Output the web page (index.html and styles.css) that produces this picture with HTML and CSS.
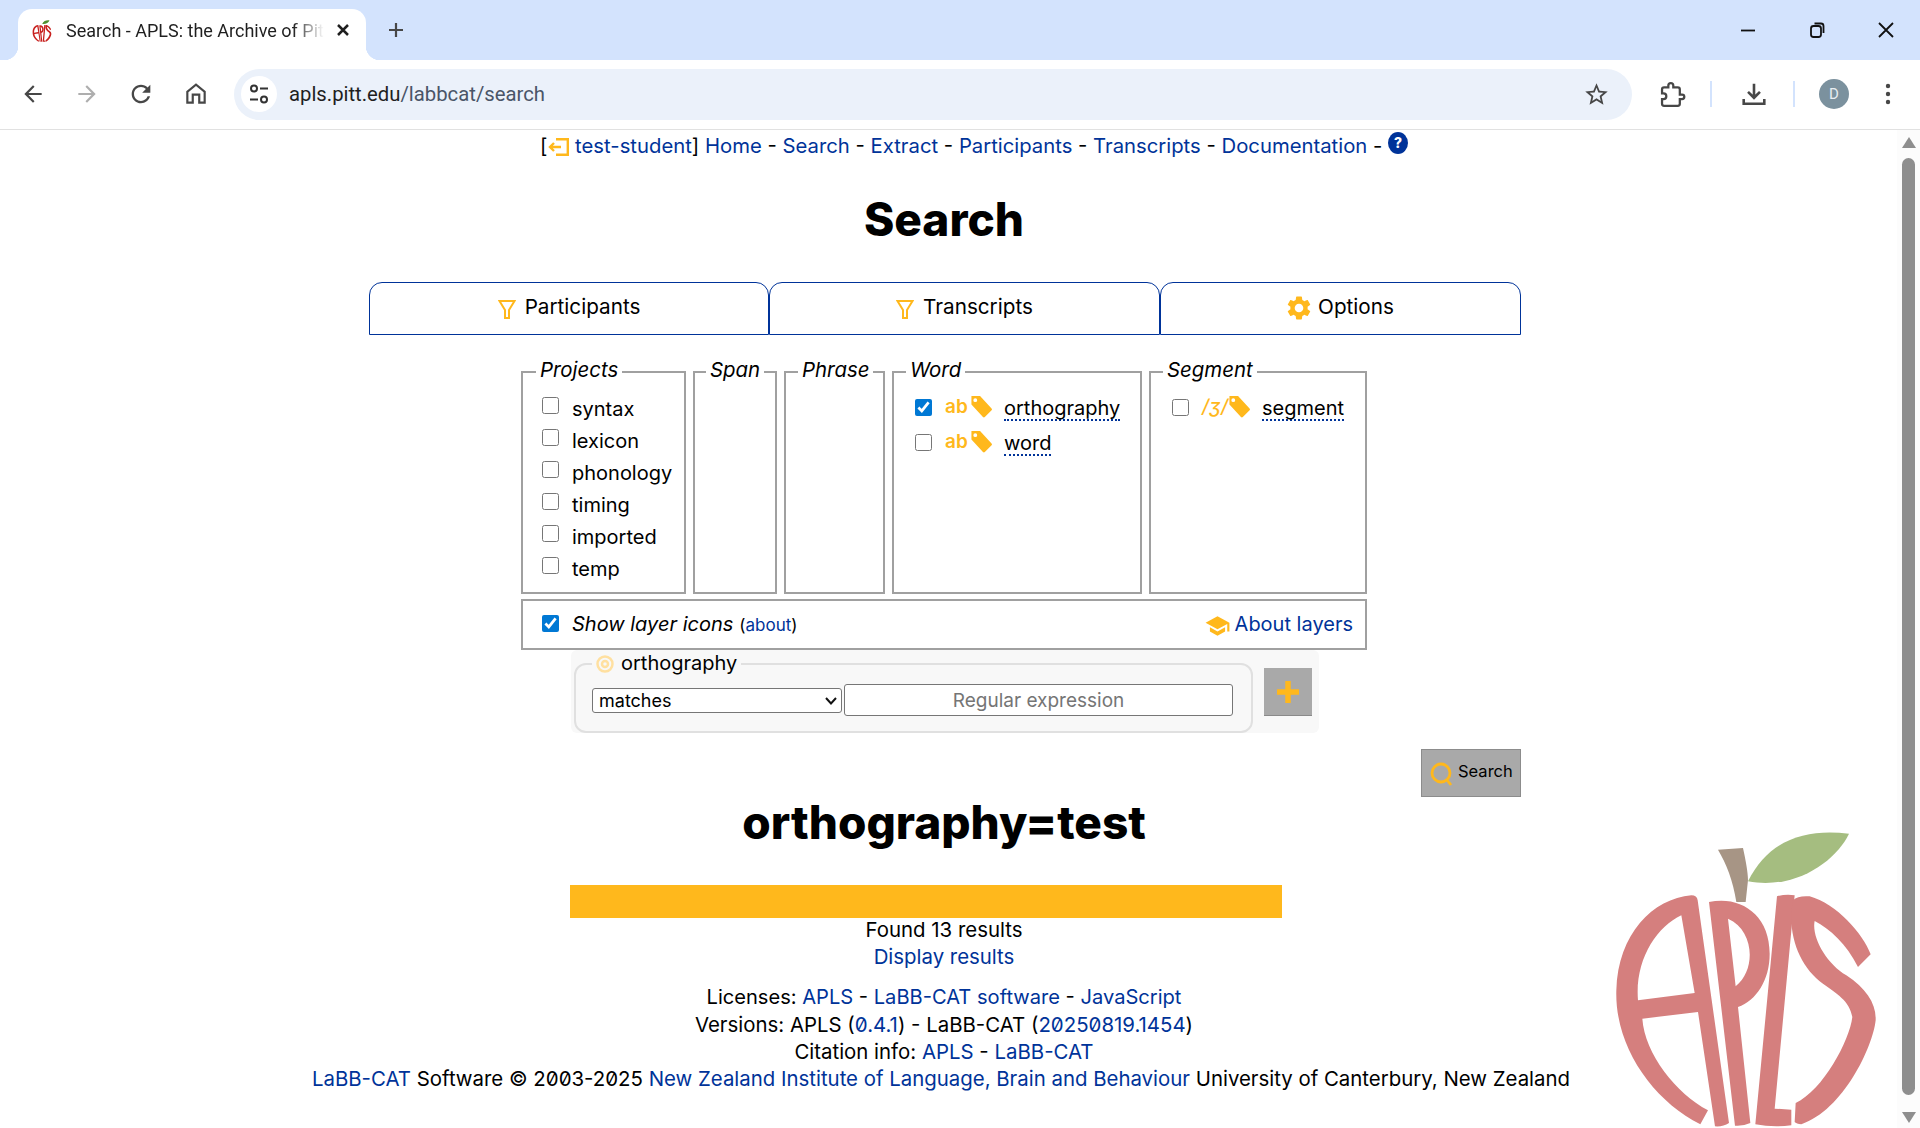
FILE: index.html
```html
<!DOCTYPE html>
<html lang="en">
<head>
<meta charset="utf-8">
<title>Search - APLS: the Archive of Pitt Language Samples</title>
<link rel="stylesheet" href="styles.css">
</head>
<body>
<svg class="defs" width="0" height="0" aria-hidden="true">
  <defs>
    <symbol id="apple-letters" viewBox="100 80 800 904">
      <path fill-rule="evenodd" d="M335 285 Q352 285 354 300 L448 968 Q430 980 406 978 L355 635 L188 655 C195 760 290 880 385 930 L362 972 C220 900 105 740 110 570 C115 400 220 295 335 285 Z M305 345 C230 380 165 480 175 600 L345 578 Z"/>
      <path fill-rule="evenodd" d="M388 305 C480 285 570 340 570 460 C570 540 530 600 475 620 L512 968 Q490 978 466 976 Z M445 355 L468 558 C530 510 525 390 445 355 Z"/>
      <path d="M592 288 Q620 280 645 285 L585 925 L635 928 L635 975 Q580 982 527 972 Z"/>
      <path d="M640 300 Q655 285 690 288 C770 310 850 400 873 462 L835 500 C800 430 750 385 705 362 C695 410 740 490 800 525 C860 565 890 610 888 660 C880 740 790 930 665 972 Q650 970 645 965 L648 908 C730 870 810 720 818 650 C810 600 770 580 730 550 C660 500 620 400 640 300 Z"/>
    </symbol>
    <symbol id="tag" viewBox="0 0 23 24">
      <path fill-rule="evenodd" d="M1 1 H10 L22 14 Q23 15 22 16 L15 23 Q14 24 13 23 L1 10 Z M5 3.4 A2 2 0 1 0 5 7.4 A2 2 0 1 0 5 3.4 Z"/>
    </symbol>
    <symbol id="funnel" viewBox="0 0 18 19">
      <path d="M1.5 1 H16.5 L11 10 V18 H7 V10 Z" fill="none" stroke="currentColor" stroke-width="2"/>
    </symbol>
  </defs>
</svg>

<div class="app">
  <header class="tabstrip">
    <div class="tab">
      <svg class="favicon" width="22" height="24" viewBox="100 0 800 984">
        <path class="fav-leaf" d="M505 243 C570 110 690 85 808 100 C770 180 650 270 505 243 Z"/>
        <g class="fav-red"><use href="#apple-letters" x="100" y="80" width="800" height="904"/></g>
      </svg>
      <span class="tab-title">Search - APLS: the Archive of Pit</span>
      <svg class="tab-close" width="14" height="14" viewBox="0 0 14 14"><path d="M2 2 L12 12 M12 2 L2 12"/></svg>
    </div>
    <svg class="new-tab" width="18" height="18" viewBox="0 0 18 18"><path d="M9 2 V16 M2 9 H16"/></svg>
    <div class="window-buttons">
      <svg width="18" height="18" viewBox="0 0 18 18"><path d="M2 9.5 H16"/></svg>
      <svg width="18" height="18" viewBox="0 0 18 18"><rect x="3" y="5" width="10" height="11" rx="2.5"/><path d="M6.5 2.5 H13 Q15.5 2.5 15.5 5 V12"/></svg>
      <svg width="18" height="18" viewBox="0 0 18 18"><path d="M2 2 L16 16 M16 2 L2 16"/></svg>
    </div>
  </header>

  <div class="toolbar">
    <div class="nav-buttons">
      <svg class="ticon" width="26" height="26" viewBox="0 0 24 24"><path d="M20 11H7.83l5.59-5.59L12 4l-8 8 8 8 1.41-1.41L7.83 13H20v-2z"/></svg>
      <svg class="ticon dim" width="26" height="26" viewBox="0 0 24 24"><path d="M4 11h12.17l-5.59-5.59L12 4l8 8-8 8-1.41-1.41L16.17 13H4v-2z"/></svg>
      <svg class="ticon" width="28" height="28" viewBox="0 0 24 24"><path d="M17.65 6.35C16.2 4.9 14.21 4 12 4c-4.42 0-7.99 3.58-7.99 8s3.57 8 7.99 8c3.73 0 6.84-2.55 7.73-6h-2.08c-.82 2.33-3.04 4-5.65 4-3.31 0-6-2.69-6-6s2.69-6 6-6c1.66 0 3.14.69 4.22 1.78L13 11h7V4l-2.35 2.35z"/></svg>
      <svg class="ticon" width="26" height="28" viewBox="0 0 24 24"><path fill-rule="evenodd" d="M12 2 L21 9.5 V21 H14 V13.5 H10 V21 H3 V9.5 Z M12 4.6 L5 10.4 V19 H8 V11.5 H16 V19 H19 V10.4 Z"/></svg>
    </div>
    <div class="address">
      <span class="site-info">
        <svg width="22" height="22" viewBox="0 0 22 22"><circle cx="6" cy="5.5" r="3"/><path d="M12 5.5 H20 M2 16.5 H10"/><circle cx="16" cy="16.5" r="3"/></svg>
      </span>
      <span class="url">apls.pitt.edu<span class="url-path">/labbcat/search</span></span>
      <svg class="ticon star" width="27" height="27" viewBox="0 0 24 24"><path d="M22 9.24l-7.19-.62L12 2 9.19 8.63 2 9.24l5.46 4.73L5.82 21 12 17.27 18.18 21l-1.63-7.03L22 9.24zM12 15.4l-3.76 2.27 1-4.28-3.32-2.88 4.38-.38L12 6.1l1.71 4.04 4.38.38-3.32 2.88 1 4.28L12 15.4z"/></svg>
    </div>
    <div class="toolbar-right">
      <svg class="ext" width="27" height="27" viewBox="0 0 24 24"><path d="M20.5 12H18.5V7.5c0-1-.8-1.8-1.8-1.8h-4V4a2.2 2.2 0 0 0-4.4 0v1.700H4.500c-1 0-1.800.8-1.800 1.800V11h1.300a2.500 2.500 0 0 1 0 5H2.700v4.200c0 1 .8 1.800 1.800 1.800h12.200c1 0 1.800-.8 1.800-1.800V16h2a2 2 0 0 0 0-4z"/></svg>
      <span class="tsep"></span>
      <svg class="dl" width="26" height="26" viewBox="0 0 24 24"><path d="M12 2.500 V15 M6.500 10 L12 15.500 L17.500 10 M2.500 16.500 V21 H21.500 V16.500"/></svg>
      <span class="tsep"></span>
      <span class="avatar">D</span>
      <svg class="ticon dots" width="6" height="24" viewBox="0 0 6 24"><circle cx="3" cy="4" r="2.200"/><circle cx="3" cy="12" r="2.200"/><circle cx="3" cy="20" r="2.200"/></svg>
    </div>
  </div>

  <div class="viewport">
    <main class="page">
      <nav class="topnav">[<svg class="login" width="21" height="18" viewBox="0 0 21 18"><path d="M8 1.200 H19.800 V16.800 H8 M13 9 H2 M6 5 L2 9 L6 13"/></svg> <a href="#">test-student</a>] <a href="#">Home</a> - <a href="#">Search</a> - <a href="#">Extract</a> - <a href="#">Participants</a> - <a href="#">Transcripts</a> - <a href="#">Documentation</a> - <a href="#" class="help">?</a></nav>

      <h1 class="title">Search</h1>

      <div class="form">
        <div class="tabs">
          <button class="seg seg-a" type="button"><svg class="ficon" width="18" height="19"><use href="#funnel"/></svg>Participants</button>
          <button class="seg seg-b" type="button"><svg class="ficon" width="18" height="19"><use href="#funnel"/></svg>Transcripts</button>
          <button class="seg seg-c" type="button"><svg class="gear" width="24" height="24" viewBox="2 2 20 20"><path d="M19.140 12.940c.04-.3.06-.61.06-.94 0-.32-.02-.64-.07-.94l2.030-1.580c.18-.14.23-.41.12-.61l-1.920-3.320c-.12-.22-.37-.29-.59-.22l-2.390.96c-.5-.38-1.030-.7-1.620-.94l-.36-2.540c-.04-.24-.24-.41-.48-.41h-3.840c-.24 0-.43.17-.47.41l-.36 2.540c-.59.24-1.130.57-1.620.94l-2.390-.96c-.22-.08-.47 0-.59.22L2.740 8.870c-.12.21-.08.47.12.61l2.030 1.580c-.05.3-.09.63-.09.94s.02.64.07.94l-2.030 1.580c-.18.14-.23.41-.12.61l1.920 3.320c.12.22.37.29.59.22l2.390-.96c.5.38 1.030.7 1.620.94l.36 2.540c.05.24.24.41.48.41h3.840c.24 0 .44-.17.47-.41l.36-2.540c.59-.24 1.130-.56 1.620-.94l2.390.96c.22.08.47 0 .59-.22l1.920-3.320c.12-.22.07-.47-.12-.61l-2.010-1.580zM12 15.600c-1.980 0-3.600-1.620-3.600-3.600s1.620-3.600 3.600-3.600 3.600 1.620 3.600 3.600-1.620 3.600-3.600 3.600z"/></svg>Options</button>
        </div>

        <div class="layers">
          <fieldset class="group g-projects">
            <legend>Projects</legend>
            <label class="prow"><input type="checkbox"><span>syntax</span></label>
            <label class="prow"><input type="checkbox"><span>lexicon</span></label>
            <label class="prow"><input type="checkbox"><span>phonology</span></label>
            <label class="prow"><input type="checkbox"><span>timing</span></label>
            <label class="prow"><input type="checkbox"><span>imported</span></label>
            <label class="prow"><input type="checkbox"><span>temp</span></label>
          </fieldset>
          <fieldset class="group g-span"><legend>Span</legend></fieldset>
          <fieldset class="group g-phrase"><legend>Phrase</legend></fieldset>
          <fieldset class="group g-word">
            <legend>Word</legend>
            <label class="lrow"><input type="checkbox" checked><span class="glyph">ab</span><svg class="tag" width="23" height="23"><use href="#tag"/></svg><span class="lname">orthography</span></label>
            <label class="lrow"><input type="checkbox"><span class="glyph">ab</span><svg class="tag" width="23" height="23"><use href="#tag"/></svg><span class="lname">word</span></label>
          </fieldset>
          <fieldset class="group g-segment">
            <legend>Segment</legend>
            <label class="lrow"><input type="checkbox"><span class="glyph ipa">/ʒ/</span><svg class="tag" width="23" height="23"><use href="#tag"/></svg><span class="lname">segment</span></label>
          </fieldset>
        </div>

        <div class="show-row">
          <label class="show"><input type="checkbox" checked><em>Show layer icons</em> <small>(<a href="#">about</a>)</small></label>
          <a class="about" href="#"><svg width="27" height="26" viewBox="0 0 24 24"><path d="M5 13.180v4L12 21l7-3.820v-4L12 17l-7-3.820zM12 3L1 9l11 6 9-4.910V17h2V9L12 3z"/></svg>About layers</a>
        </div>

        <div class="pattern">
          <fieldset class="matcher">
            <legend><svg class="target" width="18" height="18" viewBox="0 0 18 18"><circle cx="9" cy="9" r="7.500"/><circle cx="9" cy="9" r="3"/></svg>orthography</legend>
            <div class="matcher-row">
              <span class="sel-wrap">
                <select class="sel"><option>matches</option></select>
                <svg class="chev" width="12" height="8" viewBox="0 0 12 8"><path d="M1 1 L6 6.500 L11 1"/></svg>
              </span>
              <input class="rx" type="text" placeholder="Regular expression">
            </div>
          </fieldset>
          <button class="add" type="button" aria-label="Add"><svg width="26" height="26" viewBox="0 0 26 26"><path d="M13 2 V24 M2 13 H24"/></svg></button>
        </div>

        <div class="actions">
          <button class="go" type="button"><svg width="27" height="27" viewBox="0 0 27 27"><circle cx="12" cy="12" r="9"/><path d="M18 19 L22 24"/></svg>Search</button>
        </div>
      </div>

      <h2 class="query">orthography=test</h2>
      <div class="bar"></div>
      <p class="line">Found 13 results</p>
      <p class="line"><a href="#">Display results</a></p>

      <footer class="foot">
        <p class="line lic">Licenses: <a href="#">APLS</a> - <a href="#">LaBB-CAT software</a> - <a href="#">JavaScript</a></p>
        <p class="line">Versions: APLS (<a href="#" class="z">0.4.1</a>) - LaBB-CAT (<a href="#" class="z">20250819.1454</a>)</p>
        <p class="line">Citation info: <a href="#">APLS</a> - <a href="#">LaBB-CAT</a></p>
        <p class="line credit"><a href="#">LaBB-CAT</a> Software © <span class="z">2003-2025</span> <a href="#">New Zealand Institute of Language, Brain and Behaviour</a> University of Canterbury, New Zealand</p>
      </footer>

      <svg class="logo" width="266.670" height="301.330" viewBox="100 80 800 904" role="img" aria-label="APLS logo">
        <path class="logo-leaf" d="M505 243 C570 110 690 85 808 100 C770 180 650 270 505 243 Z"/>
        <path class="logo-stem" d="M415 148 L490 143 C498 180 505 215 505 240 L498 305 L470 305 C460 240 440 190 415 148 Z"/>
        <use class="logo-red" href="#apple-letters" x="100" y="80" width="800" height="904"/>
      </svg>
    </main>
    <div class="scrollbar">
      <span class="arrow up"></span>
      <span class="thumb"></span>
      <span class="arrow down"></span>
    </div>
  </div>
</div>
</body>
</html>
```
FILE: styles.css
```css
* { box-sizing: border-box; }
html, body { margin: 0; height: 100%; overflow: hidden; }
body {
  font-family: Inter, "Liberation Sans", sans-serif;
  font-size: 20.400px;
  font-variant-numeric: slashed-zero;
  color: #000;
  background: #fff;
}
.defs { position: absolute; }
a { color: #003399; text-decoration: none; }
.z { font-feature-settings: "zero" 1, "ss02" 1; }

.app { display: flex; flex-direction: column; height: 1128px; }

/* browser chrome */
.tabstrip {
  height: 60px; flex: none; background: #d3e3fd;
  display: flex; align-items: flex-start; padding-left: 18px;
  font-family: Roboto, sans-serif;
}
.tab {
  position: relative; width: 348px; height: 51px; margin-top: 9px;
  background: #fff; border-radius: 14px 14px 0 0;
  display: flex; align-items: center; padding: 0 17px 9px 13px;
}
.tab::before, .tab::after {
  content: ""; position: absolute; bottom: 0; width: 14px; height: 14px;
}
.tab::before { left: -14px; background: radial-gradient(circle at 0 0, transparent 14px, #fff 14.500px); }
.tab::after { right: -14px; background: radial-gradient(circle at 100% 0, transparent 14px, #fff 14.500px); }
.favicon { flex: none; }
.fav-leaf { fill: #4f8f2f; }
.fav-red { fill: #c8201e; }
.tab-title {
  flex: 1; margin-left: 13px; font-size: 18px; color: #1f1f1f; white-space: nowrap;
  -webkit-mask-image: linear-gradient(to right, #000 88%, transparent 100%);
  mask-image: linear-gradient(to right, #000 88%, transparent 100%);
}
.tab-close { flex: none; margin-left: 12px; fill: none; stroke: #1f1f1f; stroke-width: 2.500; }
.new-tab { margin: 21px 0 0 21px; fill: none; stroke: #474747; stroke-width: 2.200; }
.window-buttons {
  margin-left: auto; display: flex; gap: 51px; padding: 21px 25px 0 0;
}
.window-buttons svg { fill: none; stroke: #111; stroke-width: 1.800; }

.toolbar {
  height: 70px; flex: none; background: #fff; border-bottom: 1px solid #e1e1e1;
  display: flex; align-items: center; padding: 0 0 1px 20px;
}
.ticon { fill: #474747; flex: none; }
.ticon.dim { fill: #aeaeae; }
.nav-buttons { display: flex; align-items: center; gap: 27.500px; width: 214px; flex: none; }
.address {
  width: 1398px; height: 51px; flex: none; background: #ebf1fa; border-radius: 26px;
  display: flex; align-items: center; padding: 0 22px 0 7px;
  font-family: Roboto, sans-serif;
}
.site-info {
  width: 36px; height: 36px; border-radius: 50%; background: #fff; flex: none;
  display: flex; align-items: center; justify-content: center;
}
.site-info svg { fill: none; stroke: #333; stroke-width: 2; }
.url { margin-left: 12px; font-size: 20.300px; color: #1f1f1f; flex: 1; }
.url-path { color: #4a5568; }
.toolbar-right { display: flex; align-items: center; margin-left: 27px; }
.ext { fill: none; stroke: #474747; stroke-width: 2; }
.tsep { width: 2px; height: 26px; background: #d3e3fd; margin: 0 25px 0 24px; }
.dl { fill: none; stroke: #474747; stroke-width: 2.400; margin: 0 2px 0 4px; }
.avatar {
  width: 30px; height: 30px; border-radius: 50%; background: #7b919e; color: #e8eef2;
  font: 15px Roboto, sans-serif; display: flex; align-items: center; justify-content: center;
  margin-left: -1px;
}
.dots { margin-left: 36px; }

/* page */
.viewport { flex: 1; display: flex; min-height: 0; position: relative; }
.page {
  width: 1897px; flex: none; padding: 0 9px 0 0; text-align: center;
  position: relative; line-height: 27px;
}
.topnav { height: 27px; margin-top: 2px; padding-left: 60px; font-size: 20.300px; white-space: nowrap; }
.login { fill: none; stroke: #ffb81c; stroke-width: 2.400; vertical-align: -3px; margin-left: 1px; }
.help {
  display: inline-flex; width: 20px; height: 22px; border-radius: 50%;
  background: #003399; color: #fff; font-size: 14px; font-weight: 800; line-height: 22px;
  align-items: center; justify-content: center; vertical-align: 5px;
}
.title { font-size: 46px; font-weight: 800; line-height: 48px; margin: 36px 0 39px; }

.form { width: 1152px; margin-left: 369px; text-align: left; }
.tabs { display: flex; height: 53px; }
.seg {
  height: 53px; border: 1.500px solid #003399; border-radius: 13px 13px 0 0; background: #fff;
  font: inherit; font-size: 20.700px; color: #000; display: flex; align-items: center; justify-content: center; gap: 9px;
  padding: 0 0 5px; margin: 0;
}
.seg-a { width: 400px; }
.seg-b { width: 391px; }
.seg-c { width: 361px; gap: 7px; }
.ficon { color: #ffb81c; margin-top: 6px; }
.gear { fill: #ffb81c; margin-top: 3px; }

.layers { display: flex; gap: 7px; margin: 23px 0 0 152px; }
.group {
  margin: 0; height: 236px; min-width: 0; border: 2px solid #a0a0a0;
  padding: 0 0 0 12px;
}
.group legend { font-style: italic; padding: 0 4px 4px; line-height: 23px; }
.g-projects legend { margin-left: 1px; }
.g-span { padding-left: 11px; }
.g-projects { width: 165px; }
.g-span { width: 84px; }
.g-phrase { width: 101px; }
.g-word { width: 250px; }
.g-segment { width: 218px; }

.prow { display: flex; height: 32px; padding-left: 7px; font-size: 20px; }
.prow:first-of-type { margin-top: 5px; }
.prow input { margin: 7px 13px 0 0; }
.prow span { line-height: 38px; }
input[type="checkbox"] { width: 17px; height: 17px; accent-color: #0078d4; flex: none; }

.lrow { display: flex; height: 35px; align-items: flex-start; padding-left: 9px; font-size: 20px; }
.lrow:first-of-type { margin-top: 5px; }
.lrow input { margin: 9px 13px 0 0; }
.glyph { flex: none; color: #ffb81c; font-weight: 600; font-size: 19px; line-height: 34px; width: 25px; white-space: nowrap; }
.ipa { font-weight: 500; font-style: italic; width: 26px; }
.tag { fill: #ffb81c; margin-top: 5px; flex: none; }
.lname { margin-left: 11px; line-height: 25px; margin-top: 6px; border-bottom: 2px dotted #003399; height: 25px; }

.show-row {
  margin: 5px 0 0 152px; width: 846px; height: 51px; border: 2px solid #a0a0a0;
  display: flex; align-items: center; justify-content: space-between; padding: 0 12px 0 19px; font-size: 20px;
}
.show { display: flex; align-items: center; }
.show input { margin: 0 13px 2px 0; }
.show small { font-size: 17px; margin-left: 6px; padding-top: 2px; }
.about { display: flex; align-items: center; gap: 4px; }
.about svg { fill: #ffb81c; margin-top: 3px; }

.pattern {
  margin: 0 0 0 202px; width: 748px; height: 83px; background: #f8f8f8; border-radius: 6px;
  display: flex; align-items: flex-start; padding-left: 3px;
}
.matcher {
  margin: 0; width: 679px; height: 83px; min-width: 0; border: 2px solid #e0e0e0; border-radius: 12px;
  padding: 0 0 0 16px;
}
.matcher legend { padding: 0 4px; line-height: 27px; display: flex; align-items: center; gap: 7px; height: 27px; font-size: 20px; }
.target { fill: none; stroke: #ffe0a0; stroke-width: 2.500; }
.matcher-row { display: flex; align-items: center; gap: 2px; height: 32px; margin-top: 7px; }
.sel-wrap { position: relative; display: block; width: 250px; height: 25px; flex: none; }
.sel {
  display: block; width: 250px; height: 25px; font: 18px Inter, sans-serif; padding: 0 0 0 6px; background: #fff;
  border: 1px solid #767676; border-radius: 3px; color: #000; appearance: none; -webkit-appearance: none;
}
.chev { position: absolute; right: 5px; top: 9px; fill: none; stroke: #111; stroke-width: 2; pointer-events: none; }
.rx {
  width: 389px; height: 32px; font: 19px Inter, sans-serif; text-align: center; padding: 0 4px;
  border: 1px solid #767676; border-radius: 3px; background: #fff;
}
.rx::placeholder { color: #757575; opacity: 1; }
.add {
  width: 48px; height: 48px; margin: 18px 0 0 11px; padding: 0; background: #a9a9a9;
  border: 0; border-bottom: 1px solid #8a8a8a; display: flex; align-items: center; justify-content: center;
}
.add svg { fill: none; stroke: #ffb81c; stroke-width: 5.500; }

.actions { display: flex; justify-content: flex-end; margin-top: 16px; }
.go {
  width: 100px; height: 48px; background: #a9a9a9; border: 1px solid #8c8c8c; padding: 0 0 4px 7px;
  font: 16.500px Inter, sans-serif; color: #000; display: flex; align-items: center; gap: 2px;
}
.go svg { fill: none; stroke: #ffb81c; stroke-width: 2.800; margin-top: 6px; flex: none; }
.query { font-size: 46px; font-weight: 800; line-height: 48px; margin: 1px 0 39px; }
.bar { width: 712px; height: 33px; background: #ffb81c; margin: 0 0 -2px 570px; }
.line { margin: 0; height: 27px; white-space: nowrap; }
.foot { margin-top: 14px; }
.lic { font-size: 20.100px; }
.credit { margin-left: -6px; }

.logo { position: absolute; right: 17px; bottom: 0; }
.logo-leaf { fill: #a5bd80; }
.logo-stem { fill: #a79585; }
.logo-red { fill: #d57f7e; }

.scrollbar {
  width: 23px; flex: none; background: #fcfcfc; display: flex; flex-direction: column; align-items: center;
  padding: 7px 0 5px;
}
.arrow { width: 0; height: 0; flex: none; border-left: 7.500px solid transparent; border-right: 7.500px solid transparent; }
.arrow.up { border-bottom: 11px solid #8e8e8e; }
.arrow.down { border-top: 11px solid #8e8e8e; }
.thumb { width: 13px; flex: 1; background: #8e8e8e; border-radius: 7px; margin: 10px 0 17px; }
```
